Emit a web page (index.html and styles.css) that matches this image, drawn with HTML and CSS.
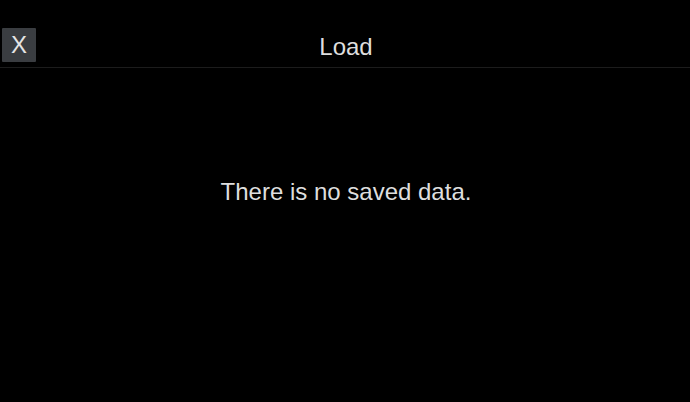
FILE: index.html
```html
<!DOCTYPE html>
<html lang="en">
<head>
<meta charset="utf-8">
<title>Load</title>
<link rel="stylesheet" href="styles.css">
</head>
<body>
<div class="screen">
  <header class="header">
    <button class="close-btn" type="button">X</button>
    <h1 class="title">Load</h1>
    <div class="spacer"></div>
  </header>
  <main class="content">
    <p class="message">There is no saved data.</p>
  </main>
</div>
</body>
</html>
```

FILE: styles.css
```css
html, body {
  margin: 0;
  padding: 0;
  background: #000;
}
body {
  width: 690px;
  height: 402px;
  overflow: hidden;
  font-family: "Liberation Sans", Arial, sans-serif;
  color: #dedede;
}
.screen {
  display: flex;
  flex-direction: column;
  height: 100%;
}
.header {
  display: grid;
  grid-template-columns: 1fr auto 1fr;
  align-items: start;
  height: 68px;
  box-sizing: border-box;
  padding-top: 28px;
  padding-left: 2px;
  border-bottom: 1px solid #1c1c1c;
}
.close-btn {
  justify-self: start;
  margin: 0;
  width: 34px;
  height: 34px;
  padding: 0;
  border: none;
  border-radius: 1px;
  background: #3a3d41;
  color: #e4e4e4;
  font-family: "Liberation Sans", Arial, sans-serif;
  font-size: 24px;
  line-height: 34px;
  text-align: center;
}
.title {
  margin: 0;
  padding-top: 2px;
  font-size: 24px;
  font-weight: normal;
  line-height: 34px;
  color: #dedede;
}
.content {
  flex: 1;
  display: flex;
  justify-content: center;
  padding-top: 110px;
  padding-left: 2px;
}
.message {
  margin: 0;
  font-size: 24px;
  line-height: 28px;
  color: #dedede;
}
```
